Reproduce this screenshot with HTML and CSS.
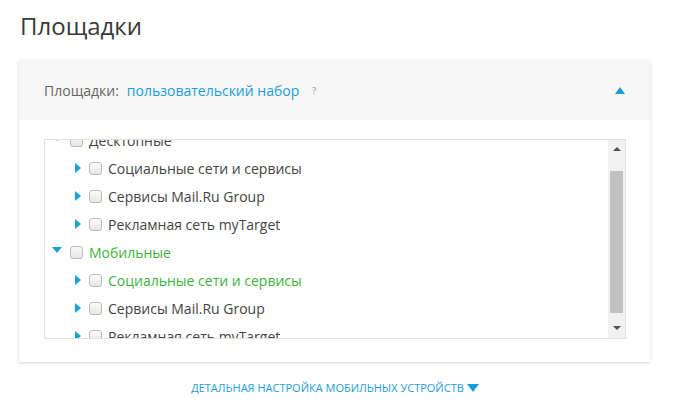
FILE: index.html
```html
<!DOCTYPE html>
<html lang="ru">
<head>
  <meta charset="UTF-8">
  <title>Площадки</title>
  <link rel="stylesheet" href="styles.css">
</head>
<body>
  <h1 class="title">Площадки</h1>

  <div class="card">
    <div class="card-head">
      <span class="head-label">Площадки:</span>
      <a class="head-link" href="#">пользовательский набор</a>
      <span class="hint">?</span>
      <span class="head-toggle"></span>
    </div>

    <div class="card-body">
      <div class="listbox">
        <div class="list">
          <div class="row lvl1"><span class="arr down"></span><span class="cb"></span><span class="txt">Десктопные</span></div>
          <div class="row lvl2"><span class="arr right"></span><span class="cb"></span><span class="txt">Социальные сети и сервисы</span></div>
          <div class="row lvl2"><span class="arr right"></span><span class="cb"></span><span class="txt">Сервисы Mail.Ru Group</span></div>
          <div class="row lvl2"><span class="arr right"></span><span class="cb"></span><span class="txt">Рекламная сеть myTarget</span></div>
          <div class="row lvl1 green"><span class="arr down"></span><span class="cb"></span><span class="txt">Мобильные</span></div>
          <div class="row lvl2 green"><span class="arr right"></span><span class="cb"></span><span class="txt">Социальные сети и сервисы</span></div>
          <div class="row lvl2"><span class="arr right"></span><span class="cb"></span><span class="txt">Сервисы Mail.Ru Group</span></div>
          <div class="row lvl2"><span class="arr right"></span><span class="cb"></span><span class="txt">Рекламная сеть myTarget</span></div>
        </div>
        <div class="scrollbar">
          <span class="sb-up"></span>
          <span class="sb-thumb"></span>
          <span class="sb-down"></span>
        </div>
      </div>
    </div>
  </div>

  <div class="footer">
    <a class="more" href="#">Детальная настройка мобильных устройств<span class="more-arr"></span></a>
  </div>
</body>
</html>
```

FILE: styles.css
```css
body {
  margin: 0;
  font-family: "Open Sans", Arial, sans-serif;
  color: #333333;
  background: #ffffff;
}

.title {
  margin: 0;
  padding: 9px 20px 0;
  height: 51px;
  font-size: 24px;
  font-weight: 400;
  line-height: 34px;
  color: #3a3a3a;
}

.card {
  margin-left: 19px;
  width: 631px;
  background: #ffffff;
  box-shadow: 0 1px 3px rgba(0, 0, 0, 0.18);
}

.card-head {
  height: 60px;
  background: #f7f7f7;
  display: flex;
  align-items: center;
  padding: 0 25px;
  font-size: 14px;
}

.head-label {
  color: #666666;
}

.head-link {
  margin-left: 8px;
  color: #1a9ed9;
  text-decoration: none;
}

.hint {
  margin-left: 13px;
  font-size: 9px;
  color: #999999;
}

.head-toggle {
  margin-left: auto;
  width: 0;
  height: 0;
  border-left: 5px solid transparent;
  border-right: 5px solid transparent;
  border-bottom: 7px solid #1a9ed9;
}

.card-body {
  padding: 19px 24px 23px 25px;
}

.listbox {
  height: 198px;
  border: 1px solid #e0e0e0;
  display: flex;
  overflow: hidden;
}

.list {
  flex: 1;
  margin-top: -14px;
  font-size: 14px;
}

.row {
  height: 28px;
  display: flex;
  align-items: center;
  color: #444444;
}

.row.green {
  color: #3cb43c;
}

.lvl1 {
  padding-left: 7px;
}

.lvl2 {
  padding-left: 30px;
}

.arr {
  width: 0;
  height: 0;
  margin-right: 8px;
}

.arr.down {
  margin-top: -4px;
  border-left: 5px solid transparent;
  border-right: 5px solid transparent;
  border-top: 6px solid #1a9ed9;
}

.arr.right {
  border-top: 5px solid transparent;
  border-bottom: 5px solid transparent;
  border-left: 6px solid #1a9ed9;
}

.cb {
  width: 11px;
  height: 11px;
  border: 1px solid #bbbbbb;
  border-radius: 3px;
  background: linear-gradient(#fafafa, #e6e6e6);
  margin-right: 6px;
}

.scrollbar {
  width: 17px;
  background: #f1f1f1;
  display: flex;
  flex-direction: column;
  align-items: center;
}

.sb-up,
.sb-down {
  width: 0;
  height: 0;
  border-left: 4px solid transparent;
  border-right: 4px solid transparent;
}

.sb-up {
  margin-top: 7px;
  border-bottom: 4px solid #505050;
}

.sb-down {
  margin-top: 13px;
  border-top: 4px solid #505050;
}

.sb-thumb {
  width: 13px;
  height: 142px;
  margin-top: 20px;
  background: #c1c1c1;
}

.footer {
  padding-top: 13px;
  text-align: center;
  padding-left: 0;
  padding-right: 4px;
}

.more {
  font-size: 11px;
  text-transform: uppercase;
  color: #1a9ed9;
  text-decoration: none;
}

.more-arr {
  display: inline-block;
  margin-left: 3px;
  width: 0;
  height: 0;
  border-left: 6px solid transparent;
  border-right: 6px solid transparent;
  border-top: 8px solid #1a9ed9;
}
```
